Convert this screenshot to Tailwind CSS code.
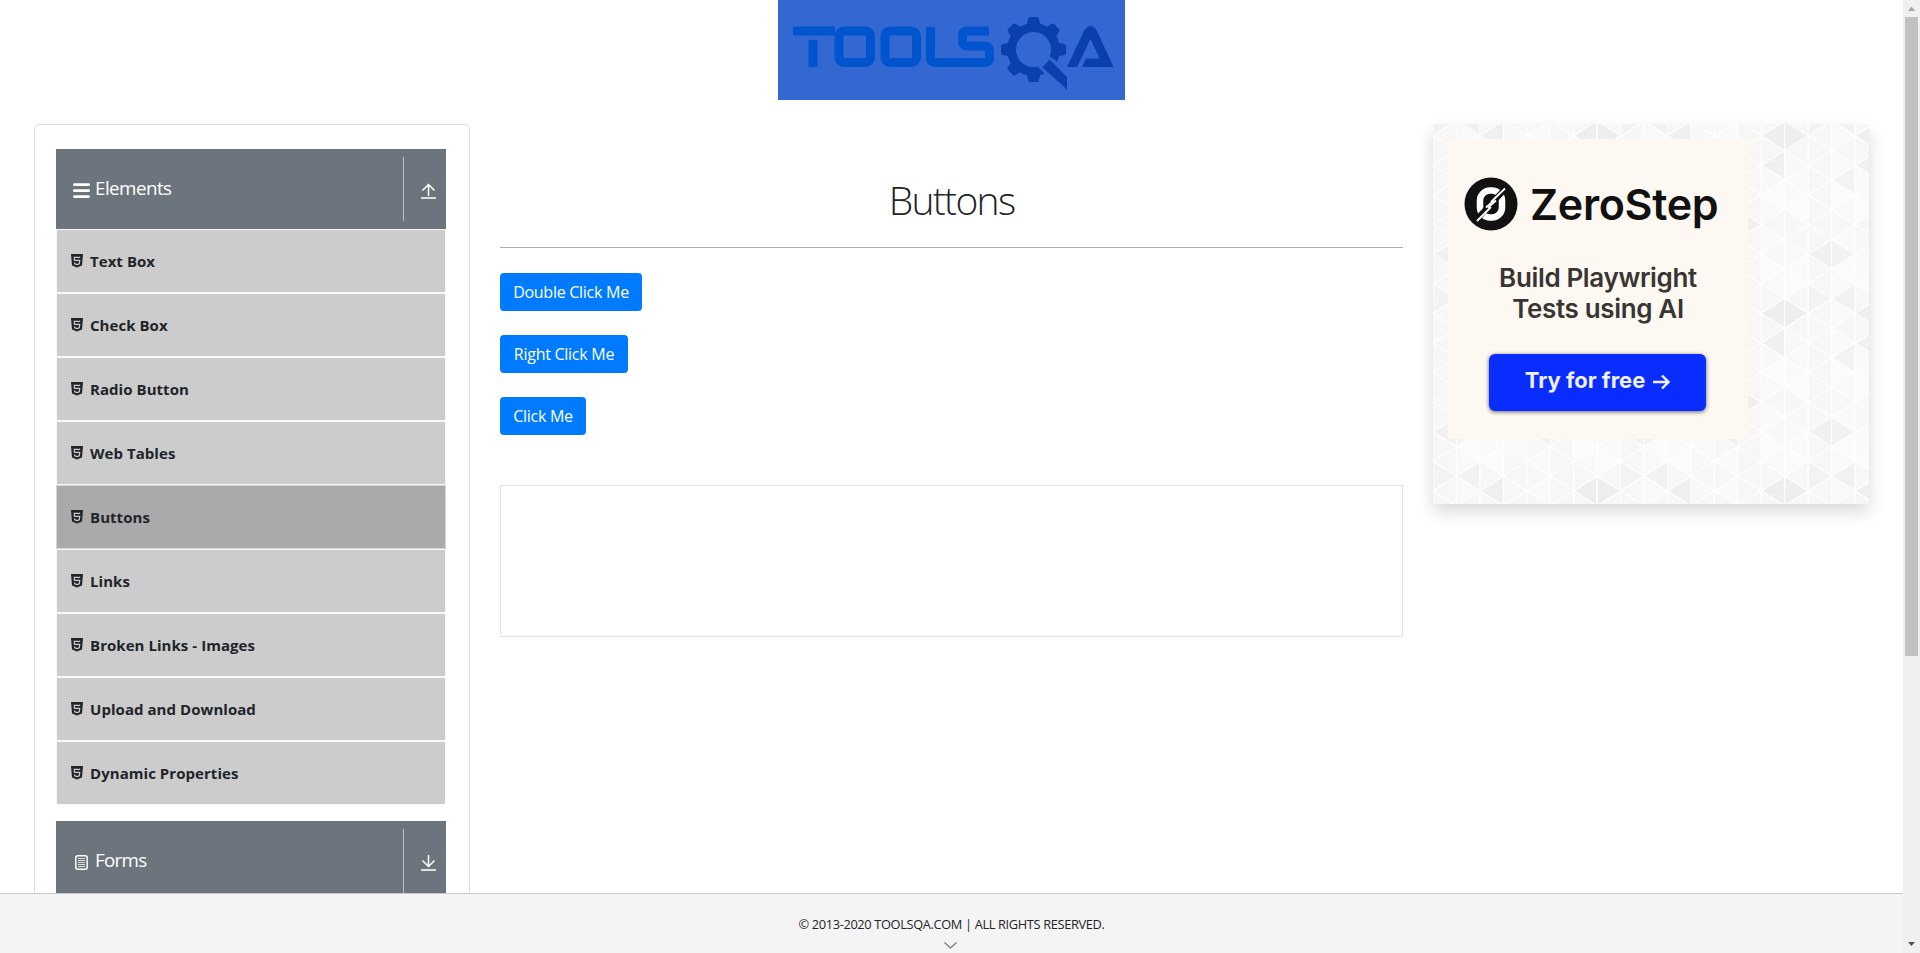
<!DOCTYPE html>
<html lang="en">
<head>
<meta charset="utf-8">
<title>ToolsQA - Buttons</title>
<script src="https://cdn.jsdelivr.net/npm/@tailwindcss/browser@4"></script>
</head>
<body class="h-[953px] w-[1920px] overflow-hidden bg-white font-['Open_Sans','Noto_Sans',sans-serif] text-base text-[#212529]">
<svg class="hidden">
  <symbol id="html5" viewBox="0 0 12 14">
    <path fill="#212529" d="M0 0h12l-1 11.6L6 13.6 1 11.6z"/>
    <path fill="none" stroke="#ccc" stroke-width="1.2" d="M9.2 3.3H3.2l.3 3h5.2l-.4 3.4L6 10.5l-2.3-.8-.1-1.3"/>
  </symbol>
</svg>
<div class="flex h-full">
  <div class="flex w-[1903px] flex-col">
    <div class="flex min-h-0 flex-1 flex-col overflow-hidden">
      <header class="flex justify-center">
        <svg class="h-[100px] w-[347px]" viewBox="0 0 347 100">
          <rect width="347" height="100" fill="#3367d1"/>
          <g fill="none" stroke="#0055cf" stroke-width="9">
            <path d="M15 31h42M35 40v27"/>
            <rect x="61" y="31" width="31.5" height="31.5" rx="5"/>
            <rect x="107" y="31" width="31.5" height="31.5" rx="5"/>
            <path d="M152.500 27v31q0 4.500 4.500 4.500h17"/>
            <path d="M211 31h-22q-4.500 0-4.500 4.500v6q0 4.500 4.500 4.500h18q4.500 0 4.500 4.500v7.500q0 4.500-4.500 4.500h-33"/>
          </g>
          <g fill="#0a3fae">
            <path fill-rule="evenodd" d="M255.500 23a26.500 26.500 0 1 0 .01 0zM255.500 32a17.500 17.500 0 1 1-.01 0z"/>
            <path id="tooth" d="M248.500 26l1.500-7q.3-2 2-2h7q1.700 0 2 2l1.500 7z"/>
            <use href="#tooth" transform="rotate(45 255.500 49.500)"/>
            <use href="#tooth" transform="rotate(90 255.500 49.500)"/>
            <use href="#tooth" transform="rotate(180 255.500 49.500)"/>
            <use href="#tooth" transform="rotate(225 255.500 49.500)"/>
            <use href="#tooth" transform="rotate(270 255.500 49.500)"/>
            <use href="#tooth" transform="rotate(315 255.500 49.500)"/>
            <path fill="#3367d1" d="M260 67l11-11 18 12v10l-18 0z"/>
            <path d="M264.500 67.500l7-8L289 77v12.500z"/>
            <path d="M289 67l17.500-37q6-8 12 0L335.500 67H304l4-8.500h13.500L312.500 39 299 67z"/>
          </g>
        </svg>
      </header>
      <div class="mt-6 flex items-start pl-[34px]">
        <aside class="flex h-[900px] w-[436px] shrink-0 flex-col rounded-[5px] border border-[#dfdfdf] px-[21px] pt-6">
          <div class="flex h-20 w-[390px] shrink-0 items-center bg-[#6c757d] text-white">
            <svg class="mt-[3px] ml-[17px] h-[17px] w-[17px]" viewBox="0 0 17 17"><path stroke="#fff" stroke-width="2.800" stroke-linecap="round" d="M1.400 2.700h14.200M1.400 8.700h14.200M1.400 14.600h14.200"/></svg>
            <span class="ml-[5px] pb-0.5 text-[18.8px] tracking-[-0.55px]">Elements</span>
            <div class="ml-auto flex h-16 w-[43px] items-center border-l border-[#bcc0c3] pl-[17px]">
              <svg class="mt-[3px] h-4 w-[15px]" viewBox="0 0 15 16" fill="none" stroke="#fff"><path stroke-width="1.500" d="M7.500 13V1.500M1.500 7.500l6-6 6 6"/><path stroke="#dddfe1" stroke-width="2" d="M0 15h15"/></svg>
            </div>
          </div>
          <ul id="menu" class="w-[390px] shrink-0 text-[15px] font-bold tracking-[0.05px]"></ul>
          <div class="mt-4 flex h-20 w-[390px] shrink-0 items-center bg-[#6c757d] text-white">
            <svg class="mt-[3px] ml-[19px] h-[15px] w-[13px]" viewBox="0 0 13 15" fill="none" stroke="#fff"><rect x=".8" y=".8" width="11.400" height="13.400" rx="2" stroke-width="1.500"/><path stroke-width="1" opacity=".75" d="M3 3.500h7M3 5.500h7M3 7.500h7M3 9.500h7M3 11.500h7"/></svg>
            <span class="ml-[7px] pb-0.5 text-[18.8px] tracking-[-0.7px]">Forms</span>
            <div class="ml-auto flex h-16 w-[43px] items-center border-l border-[#bcc0c3] pl-[17px]">
              <svg class="mt-[3px] h-4 w-[15px]" viewBox="0 0 15 16" fill="none" stroke="#fff"><path stroke-width="1.500" d="M7.500 0v11.500M1.500 5.500l6 6 6-6"/><path stroke="#dddfe1" stroke-width="2" d="M0 15h15"/></svg>
            </div>
          </div>
        </aside>
        <main class="ml-[30px] w-[903px]">
          <h1 class="mt-12 text-center text-[39px] leading-[56px] font-light tracking-[-1.7px]">Buttons</h1>
          <div class="mt-[19px] h-px bg-[#acadaf]"></div>
          <div class="mt-[25px] flex flex-col items-start gap-6 tracking-[-0.27px] text-white">
            <button class="h-[38px] w-[142px] rounded bg-[#007bff]">Double Click Me</button>
            <button class="h-[38px] w-[128px] rounded bg-[#007bff]">Right Click Me</button>
            <button class="h-[38px] w-[86px] rounded bg-[#007bff]">Click Me</button>
          </div>
          <div class="mt-[50px] h-[152px] border border-[#e4e4e4]"></div>
        </main>
        <section class="relative ml-[30px] h-[380px] w-[436px] bg-white p-[15px] shadow-[0_8px_16px_rgba(0,0,0,0.15)]">
          <svg id="pattern" class="absolute inset-0 h-[380px] w-[436px]" viewBox="0 0 436 380"></svg>
          <div class="relative flex h-[300px] w-[300px] flex-col bg-[#fef8f2] font-[Inter,sans-serif]">
            <div class="mt-[35px] flex h-[60px] items-center pl-4">
              <svg class="h-[54px] w-[54px]" viewBox="0 0 54 54">
                <circle cx="27" cy="27" r="26.500" fill="#111"/>
                <rect x="16" y="13.500" width="22" height="27" rx="10" fill="none" stroke="#fff" stroke-width="6.500"/>
                <path stroke="#111" stroke-width="6" d="M12 43L42 11"/>
                <path stroke="#fff" stroke-width="1.800" d="M27 25L41 11.500M22 30.500l8-7M24 30.500l8-7M13 44l14-14"/>
              </svg>
              <span class="ml-3 text-[43px] leading-[50px] font-semibold tracking-[-0.3px] text-[#111]">ZeroStep</span>
            </div>
            <div class="mt-[28px] text-center text-[26px] leading-[31px] font-semibold tracking-[-0.35px] text-[#383532]">Build Playwright<br>Tests using AI</div>
            <div class="mt-[30px] ml-[41px] flex h-[57px] w-[217px] items-center justify-center rounded-md bg-[#0a2dff] pb-1 text-[22px] font-bold text-[#eef0ff] shadow-[0_1px_4px_rgba(0,0,0,0.6)]">Try for free
              <svg class="mt-0.5 ml-2 h-4 w-[17px]" viewBox="0 0 17 16" fill="none" stroke="#eef0ff" stroke-width="2.400"><path d="M0 8h15M9 1.500L15.500 8 9 14.500"/></svg>
            </div>
          </div>
        </section>
      </div>
    </div>
    <footer class="flex h-[60px] flex-col items-center border-t border-[#c9c9c9] bg-[#f4f4f4]">
      <span class="mt-[19px] text-[12.8px] leading-[22px] tracking-[-0.35px]">© 2013-2020 TOOLSQA.COM | ALL RIGHTS RESERVED.</span>
      <svg class="mt-[7px] mr-0.5 h-[7px] w-[13px]" viewBox="0 0 13 7"><path d="M.5.5l6 5.500 6-5.500" fill="none" stroke="#777" stroke-width="1.200"/></svg>
    </footer>
  </div>
  <div class="flex w-[17px] flex-col items-center bg-[#f0f0f0]">
    <svg class="h-[17px] w-[17px]" viewBox="0 0 17 17"><path fill="#a3a3a3" d="M8.500 6.500L12 11H5z"/></svg>
    <div class="h-[639px] w-[13px] bg-[#c1c1c1]"></div>
    <svg class="mt-auto h-[17px] w-[17px]" viewBox="0 0 17 17"><path fill="#505050" d="M5 6h7l-3.500 4z"/></svg>
  </div>
</div>
<script>
const names = ['Text Box','Check Box','Radio Button','Web Tables','Buttons','Links','Broken Links - Images','Upload and Download','Dynamic Properties'];
document.getElementById('menu').innerHTML = names.map(n =>
  `<li class="flex h-16 items-center border pl-[14px] ${n === 'Buttons' ? 'border-[#ced4da] bg-[#aaa]' : 'border-[#f8f8f8] bg-[#ccc]'}"><svg class="mt-[-1px] mr-[7px] h-[14px] w-3"><use href="#html5"/></svg><span>${n}</span></li>`).join('');

// Triangular mosaic: 8 columns by 12 half-rows, repeated
const dark = {'6,0':238,'7,0':238,'2,0':239,'6,2':240,'2,2':241,'1,3':243,'5,6':240,'0,8':241,'1,8':242,'4,8':240,'0,11':243,'1,11':242};
let out = '';
for (let c = 0; c < 19; c++) for (let j = -1; j < 27; j++) {
  const m = (j + 12) % 12, k = (c % 8) + ',' + m;
  const v = dark[k] || 247 + ((c % 8) * 7 + m * 5 + (c % 8) * m * 3) % 5;
  const x = c * 23.45, y = 11.8 + j * 14.8, left = (c + j) % 2 === 0;
  const pts = left ? [[x, y], [x + 23.45, y - 14.8], [x + 23.45, y + 14.8]] : [[x + 23.45, y], [x, y - 14.8], [x, y + 14.8]];
  out += `<polygon points="${pts.join(' ')}" fill="rgb(${v},${v},${v})" stroke="#fefefe" stroke-width="1.1"/>`;
}
document.getElementById('pattern').innerHTML = out;
</script>
</body>
</html>
